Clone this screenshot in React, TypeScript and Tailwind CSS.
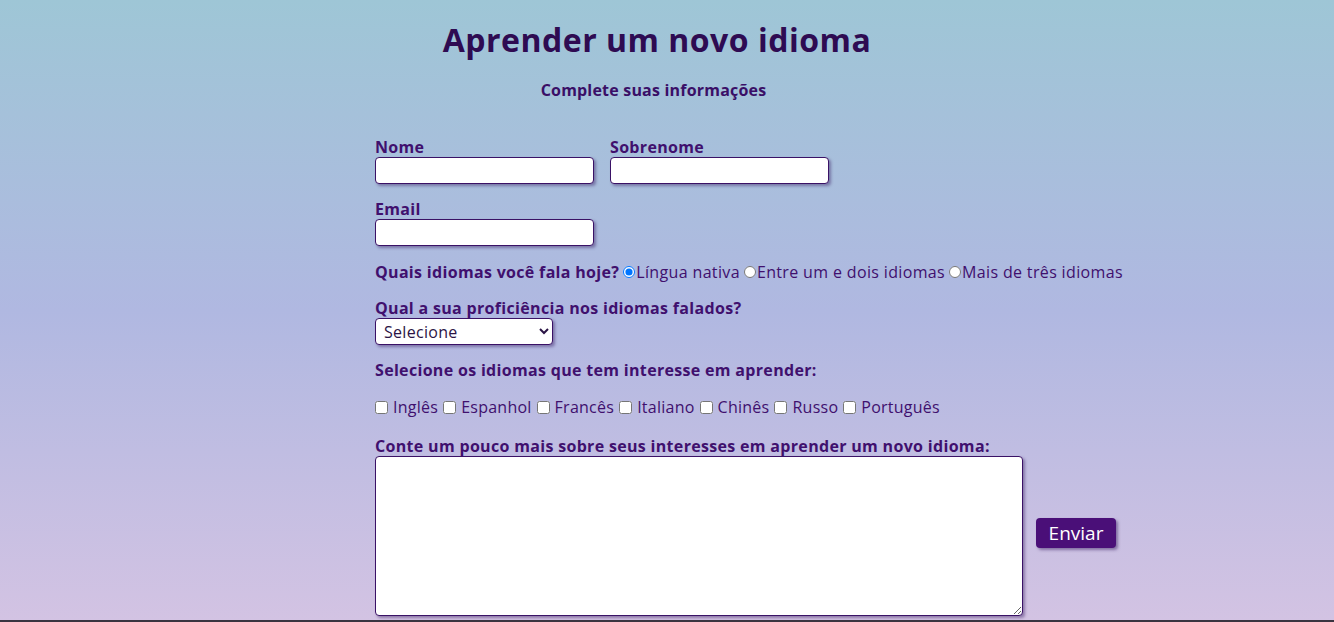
import React from "react";

const langs = ["Inglês", "Espanhol", "Francês", "Italiano", "Chinês", "Russo", "Português"];

export default function App() {
  const inputCls =
    "block h-[27px] w-[219px] rounded-[4px] border border-[#3a1266] bg-white shadow-[2px_2px_3px_rgba(60,30,100,0.45)] outline-none";
  const labelCls = "block h-[20px] leading-[20px] text-[16px] font-bold tracking-[0.32px] text-[#40106e]";
  return (
    <div
      className="flex min-h-[622px] flex-col bg-gradient-to-b from-[#9ec6d6] via-[#b0b8e1] to-[#d3c3e3]"
      style={{ fontFamily: "'Open Sans', Lato, sans-serif" }}
    >
      <div className="w-[1314px] pt-[20px] text-center">
        <h1 className="h-[40px] text-[32px] font-bold leading-[40px] tracking-[0.5px] text-[#2e0b52]">
          Aprender um novo idioma
        </h1>
        <p className="mt-[20px] h-[20px] pr-[7px] text-[16px] font-bold leading-[20px] tracking-[0.2px] text-[#3a0f67]">
          Complete suas informações
        </p>
      </div>

      <form className="flex flex-1 flex-col pl-[375px] pt-[37px] text-[#40106e]">
        <div className="flex gap-[16px]">
          <div>
            <label className={labelCls}>Nome</label>
            <input className={inputCls} />
          </div>
          <div>
            <label className={labelCls}>Sobrenome</label>
            <input className={inputCls} />
          </div>
        </div>

        <div className="mt-[15px]">
          <label className={labelCls}>Email</label>
          <input className={inputCls} />
        </div>

        <div className="mt-[16px] flex h-[20px] items-center text-[16px] leading-[20px] tracking-[0.35px]">
          <span className="font-bold tracking-[0.32px]">Quais idiomas você fala hoje?</span>
          <input type="radio" name="n" defaultChecked className="mx-[1px] ml-[4px] h-[12px] w-[12px]" />
          <span>Língua nativa</span>
          <input type="radio" name="n" className="mx-[1px] ml-[4px] h-[12px] w-[12px]" />
          <span>Entre um e dois idiomas</span>
          <input type="radio" name="n" className="mx-[1px] ml-[4px] h-[12px] w-[12px]" />
          <span>Mais de três idiomas</span>
        </div>

        <div className="mt-[16px]">
          <label className={labelCls}>Qual a sua proficiência nos idiomas falados?</label>
          <select className="block h-[27px] w-[178px] rounded-[4px] border border-[#3a1266] bg-white pl-[4px] text-[16px] tracking-[0.3px] text-[#2b1445] shadow-[2px_2px_3px_rgba(60,30,100,0.45)] outline-none">
            <option>Selecione</option>
          </select>
        </div>

        <div className="mt-[15px]">
          <label className={labelCls}>Selecione os idiomas que tem interesse em aprender:</label>
        </div>

        <div className="mt-[17px] flex h-[20px] items-center text-[16px] leading-[20px] tracking-[0.25px]">
          {langs.map((l) => (
            <span key={l} className="mr-[5px] flex items-center">
              <input type="checkbox" className="mr-[5px] h-[13px] w-[13px]" />
              {l}
            </span>
          ))}
        </div>

        <div className="mt-[19px]">
          <label className={labelCls}>
            Conte um pouco mais sobre seus interesses em aprender um novo idioma:
          </label>
          <div className="flex items-center gap-[13px]">
            <textarea className="block h-[160px] w-[648px] rounded-[4px] border border-[#3a1266] bg-white shadow-[2px_2px_3px_rgba(60,30,100,0.45)] outline-none" />
            <button
              type="button"
              className="mb-[6px] h-[30px] w-[80px] rounded-[4px] bg-[#4a0f78] text-[19px] leading-[30px] text-white shadow-[2px_2px_3px_rgba(60,30,100,0.5)]"
            >
              Enviar
            </button>
          </div>
        </div>
      </form>
      <div className="h-[2px] bg-[#3a3440]" />
    </div>
  );
}
